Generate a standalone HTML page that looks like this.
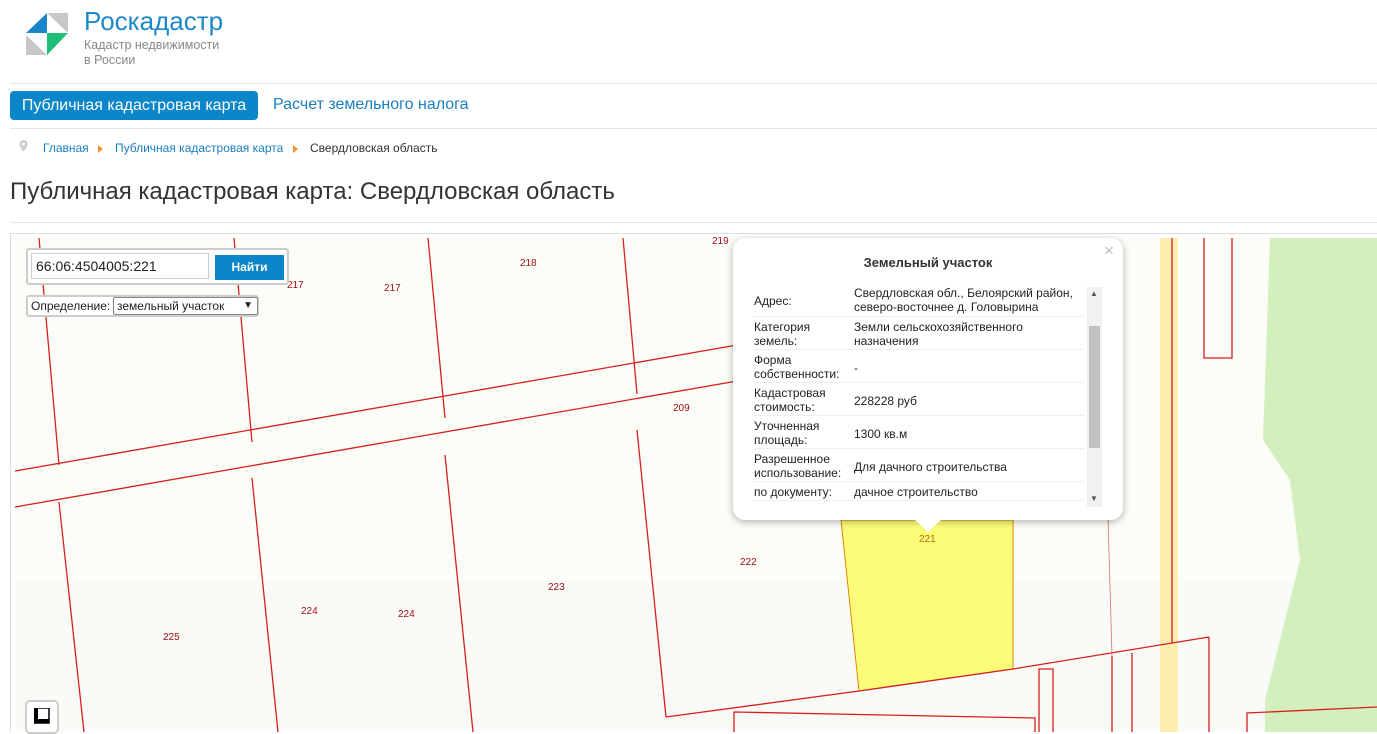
<!DOCTYPE html>
<html><head><meta charset="utf-8"><style>
*{box-sizing:border-box;margin:0;padding:0}
body{width:1377px;height:732px;overflow:hidden;background:#fff;font-family:"Liberation Sans",Arial,sans-serif;position:relative;color:#333}
.a{position:absolute;white-space:nowrap}
.hr{position:absolute;left:10px;right:0;height:1px;background:#e5e5e5}
</style></head><body>
<svg class="a" style="left:0;top:0" width="80" height="70"><polygon points="26,33 47,13 47,33" fill="#1a86c8"/><polygon points="47,13 68,13 68,33" fill="#c8c8c8"/><polygon points="47,33 68,33 47,55" fill="#1fbf7a"/><polygon points="26,35 47,55 26,55" fill="#c8c8c8"/></svg>
<div class="a" style="left:84px;top:6px;font-size:26px;color:#1a88c9">Роскадастр</div>
<div class="a" style="left:84px;top:38px;font-size:12.5px;color:#888;line-height:15px">Кадастр недвижимости<br>в России</div>
<div class="hr" style="top:83px"></div>
<div class="a" style="left:10px;top:91px;width:248px;height:29px;background:#0b86c8;border-radius:4px;color:#fff;font-size:16px;line-height:29px;text-align:center">Публичная кадастровая карта</div>
<div class="a" style="left:273px;top:96px;font-size:16px;color:#1a7fbe">Расчет земельного налога</div>
<div class="hr" style="top:128px"></div>
<svg class="a" style="left:19px;top:140px" width="9" height="12"><path d="M4.5 0a4 4 0 0 0-4 4c0 3 4 7.5 4 7.5s4-4.5 4-7.5a4 4 0 0 0-4-4z" fill="#ccc"/><circle cx="4.5" cy="4" r="1.5" fill="#fff"/></svg>
<div class="a" style="left:43px;top:141px;font-size:12px;color:#1a7fbe">Главная</div>
<svg class="a" style="left:98px;top:145px" width="6" height="8"><polygon points="0,0 5,4 0,8" fill="#f0922b"/></svg>
<div class="a" style="left:115px;top:141px;font-size:12px;color:#1a7fbe">Публичная кадастровая карта</div>
<svg class="a" style="left:293px;top:145px" width="6" height="8"><polygon points="0,0 5,4 0,8" fill="#f0922b"/></svg>
<div class="a" style="left:310px;top:141px;font-size:12px;color:#333">Свердловская область</div>
<div class="a" style="left:10px;top:178px;font-size:24px;color:#333">Публичная кадастровая карта: Свердловская область</div>
<div class="hr" style="top:222px"></div>
<div class="a" style="left:10px;top:233px;width:1367px;height:499px;border:1px solid #ddd;border-right:none;border-bottom:none;background:#fff;overflow:hidden">
<svg class="a" style="left:-11px;top:-234px" width="1377" height="732" viewBox="0 0 1377 732">
<rect x="15" y="238" width="1362" height="494" fill="#fdfdf8"/>
<rect x="15" y="580" width="1362" height="152" fill="#fafaf6"/>
<path d="M1270,238 L1263,440 L1290,480 L1300,560 L1265,700 L1265,732 L1377,732 L1377,238Z" fill="#d3efbe"/>
<rect x="1160" y="238" width="18" height="494" fill="#fdeeb0"/>
<polygon points="841,520 1013,520 1013,669 859,691" fill="#fcfc7a" stroke="#e08a00" stroke-width="1"/>
<g stroke="#d42020" stroke-width="1.3" fill="none">
<line x1="39" y1="238" x2="59" y2="465"/><line x1="234" y1="238" x2="252" y2="442"/><line x1="428" y1="238" x2="445" y2="418"/><line x1="623" y1="238" x2="637" y2="394"/>
<line x1="15" y1="471" x2="760" y2="341"/><line x1="15" y1="507" x2="760" y2="377"/>
<line x1="59" y1="502" x2="84" y2="732"/><line x1="252" y1="478" x2="278" y2="732"/><line x1="445" y1="455" x2="473" y2="732"/><line x1="637" y1="430" x2="666" y2="717"/>
<polyline points="666,717 859,691 1013,669 1209,637"/>
<line x1="1172" y1="238" x2="1172" y2="643"/>
<polyline points="1204,238 1204,358 1232,358 1232,238"/>
<line x1="1209" y1="637" x2="1209" y2="732"/><line x1="1112" y1="656" x2="1112" y2="732"/><line x1="1132" y1="653" x2="1132" y2="732"/>
<polyline points="734,732 734,712 1035,718 1035,732"/>
<polyline points="1039,732 1039,669 1053,669 1053,732"/>
<polyline points="1247,732 1247,713 1377,707"/>
</g>
<line x1="1100" y1="238" x2="1112" y2="656" stroke="#e07070" stroke-width="0.8"/>
<g font-family="Liberation Sans,Arial" font-size="10" fill="#a0101a">
<text x="287" y="288">217</text><text x="384" y="291">217</text><text x="520" y="266">218</text><text x="712" y="244">219</text><text x="673" y="411">209</text><text x="163" y="640">225</text><text x="301" y="614">224</text><text x="398" y="617">224</text><text x="548" y="590">223</text><text x="740" y="565">222</text><text x="919" y="542" fill="#b07000">221</text>
</g>
</svg>
</div>
<div class="a" style="left:26px;top:248px;width:263px;height:37px;background:#fff;border:2px solid #ccc;border-radius:3px"></div>
<div class="a" style="left:31px;top:253px;width:178px;height:26px;border:1px solid #ccc;font-size:14px;line-height:24px;padding-left:4px;color:#222">66:06:4504005:221</div>
<div class="a" style="left:215px;top:255px;width:69px;height:25px;background:#0b86c8;color:#fff;font-size:12px;font-weight:bold;line-height:25px;text-align:center">Найти</div>
<div class="a" style="left:26px;top:295px;width:233px;height:22px;background:#fff;border:2px solid #ccc;border-radius:3px"></div>
<div class="a" style="left:31px;top:299px;font-size:12px;color:#222">Определение:</div>
<div class="a" style="left:113px;top:297px;width:145px;height:18px;border:1px solid #888;border-radius:2px;font-size:12px;line-height:16px;padding-left:3px;color:#222">земельный участок<span style="position:absolute;right:4px;top:0;font-size:10px">&#9660;</span></div>
<div class="a" style="left:25px;top:700px;width:34px;height:34px;background:#fff;border:2px solid #ccc;border-radius:5px"></div>
<svg class="a" style="left:34px;top:708px" width="16" height="16"><rect x="0" y="0" width="15" height="15" fill="#fff" stroke="#000" stroke-width="1.5"/><rect x="0" y="0" width="4" height="15" fill="#000"/><rect x="0" y="11" width="15" height="4" fill="#000"/></svg>
<div class="a" style="left:733px;top:238px;width:390px;height:282px;background:#fff;border-radius:12px;box-shadow:0 2px 8px rgba(0,0,0,.3)"></div>
<svg class="a" style="left:914px;top:519px" width="28" height="14"><polygon points="0,0 28,0 14,13" fill="#fff"/></svg>
<div class="a" style="left:1104px;top:241px;font-size:17px;color:#bbb">×</div>
<div class="a" style="left:733px;top:255px;width:390px;text-align:center;font-size:13px;font-weight:bold;color:#333">Земельный участок</div>
<div class="a" style="left:1087px;top:287px;width:15px;height:220px;background:#f1f1f1"></div>
<div class="a" style="left:1089px;top:326px;width:11px;height:122px;background:#c1c1c1"></div>
<div class="a" style="left:1090px;top:289px;font-size:8px;color:#555">&#9650;</div>
<div class="a" style="left:1090px;top:494px;font-size:8px;color:#555">&#9660;</div>
<div class="a" style="left:754px;top:286px;width:330px;font-size:12px;line-height:14px;color:#222">
<div style="display:flex;height:31px;border-bottom:1px solid #eee"><div style="width:100px;padding-top:8px">Адрес:</div><div>Свердловская обл., Белоярский район,<br>северо-восточнее д. Головырина</div></div>
<div style="display:flex;height:33px;border-bottom:1px solid #eee;padding-top:3px"><div style="width:100px">Категория<br>земель:</div><div>Земли сельскохозяйственного<br>назначения</div></div>
<div style="display:flex;height:33px;border-bottom:1px solid #eee;padding-top:3px"><div style="width:100px">Форма<br>собственности:</div><div style="padding-top:8px">-</div></div>
<div style="display:flex;height:33px;border-bottom:1px solid #eee;padding-top:3px"><div style="width:100px">Кадастровая<br>стоимость:</div><div style="padding-top:8px">228228 руб</div></div>
<div style="display:flex;height:33px;border-bottom:1px solid #eee;padding-top:3px"><div style="width:100px">Уточненная<br>площадь:</div><div style="padding-top:8px">1300 кв.м</div></div>
<div style="display:flex;height:33px;border-bottom:1px solid #eee;padding-top:3px"><div style="width:100px">Разрешенное<br>использование:</div><div style="padding-top:8px">Для дачного строительства</div></div>
<div style="display:flex;height:19px;border-bottom:1px solid #eee;padding-top:3px"><div style="width:100px">по документу:</div><div>дачное строительство</div></div>
</div>
</body></html>
